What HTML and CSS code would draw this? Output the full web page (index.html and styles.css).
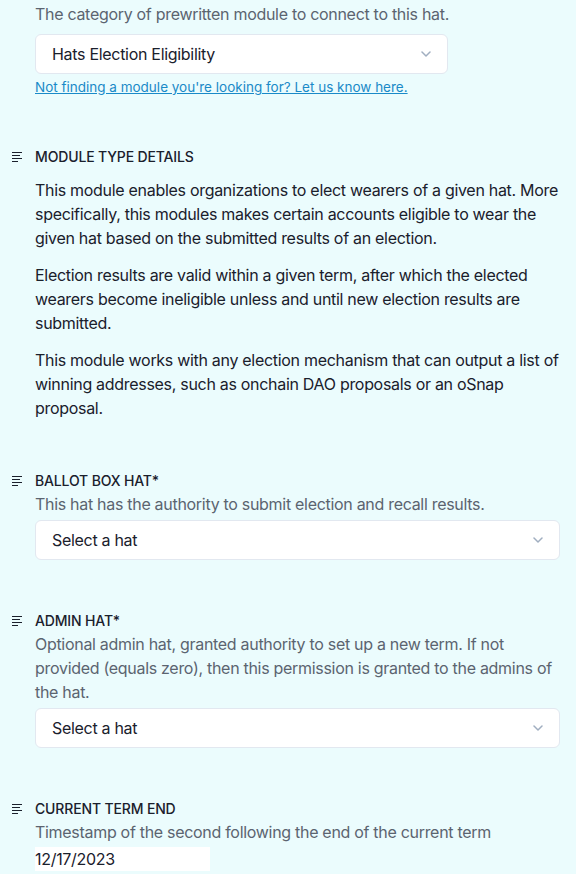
FILE: index.html
```html
<!DOCTYPE html>
<html>
<head>
<meta charset="utf-8">
<link rel="stylesheet" href="styles.css">
</head>
<body>
<div class="page">
  <section class="field first">
    <div class="body">
      <p class="desc">The category of prewritten module to connect to this hat.</p>
      <div class="select narrow"><span class="value">Hats Election Eligibility</span><svg class="chev" width="10" height="6" viewBox="0 0 10 6"><path d="M1 1l4 4 4-4" fill="none" stroke="#A0AEC0" stroke-width="1.5" stroke-linecap="round" stroke-linejoin="round"/></svg></div>
      <a class="link" href="#">Not finding a module you're looking for? Let us know here.</a>
    </div>
  </section>

  <section class="field details">
    <div class="head"><svg class="icon" width="11" height="10" viewBox="0 0 11 10"><path d="M0 0.5h10M0 3.5h8M0 6.5h10M0 9.5h6" stroke="#1A202C" stroke-width="1"/></svg><h3>Module Type Details</h3></div>
    <div class="body">
      <p class="para">This module enables organizations to elect wearers of a given hat. More specifically, this modules makes certain accounts eligible to wear the given hat based on the submitted results of an election.</p>
      <p class="para">Election results are valid within a given term, after which the elected wearers become ineligible unless and until new election results are submitted.</p>
      <p class="para">This module works with any election mechanism that can output a list of winning addresses, such as onchain DAO proposals or an oSnap proposal.</p>
    </div>
  </section>

  <section class="field">
    <div class="head"><svg class="icon" width="11" height="10" viewBox="0 0 11 10"><path d="M0 0.5h10M0 3.5h8M0 6.5h10M0 9.5h6" stroke="#1A202C" stroke-width="1"/></svg><h3>Ballot Box Hat*</h3></div>
    <div class="body">
      <p class="desc">This hat has the authority to submit election and recall results.</p>
      <div class="select"><span class="value">Select a hat</span><svg class="chev" width="10" height="6" viewBox="0 0 10 6"><path d="M1 1l4 4 4-4" fill="none" stroke="#A0AEC0" stroke-width="1.5" stroke-linecap="round" stroke-linejoin="round"/></svg></div>
    </div>
  </section>

  <section class="field">
    <div class="head"><svg class="icon" width="11" height="10" viewBox="0 0 11 10"><path d="M0 0.5h10M0 3.5h8M0 6.5h10M0 9.5h6" stroke="#1A202C" stroke-width="1"/></svg><h3>Admin Hat*</h3></div>
    <div class="body">
      <p class="desc">Optional admin hat, granted authority to set up a new term. If not provided (equals zero), then this permission is granted to the admins of the hat.</p>
      <div class="select"><span class="value">Select a hat</span><svg class="chev" width="10" height="6" viewBox="0 0 10 6"><path d="M1 1l4 4 4-4" fill="none" stroke="#A0AEC0" stroke-width="1.5" stroke-linecap="round" stroke-linejoin="round"/></svg></div>
    </div>
  </section>

  <section class="field">
    <div class="head"><svg class="icon" width="11" height="10" viewBox="0 0 11 10"><path d="M0 0.5h10M0 3.5h8M0 6.5h10M0 9.5h6" stroke="#1A202C" stroke-width="1"/></svg><h3>Current Term End</h3></div>
    <div class="body">
      <p class="desc">Timestamp of the second following the end of the current term</p>
      <div class="date">12/17/2023</div>
    </div>
  </section>
</div>
</body>
</html>
```

FILE: styles.css
```css
* { box-sizing: border-box; }
html, body { margin: 0; padding: 0; }
body {
  background: #EBFCFD;
  font-family: Inter, "Noto Sans", sans-serif;
  color: #1A202C;
  width: 576px;
  height: 874px;
  overflow: hidden;
}
.page {
  padding: 2px 16px 0 12px;
  display: flex;
  flex-direction: column;
}
.field {
  margin-top: 51px;
  display: flex;
  flex-direction: column;
}
.field.first { margin-top: 0; }
.field.details { margin-top: 50px; }
.head {
  display: flex;
  align-items: center;
  gap: 12px;
  height: 20px;
}
.icon { flex: none; display: block; }
.head h3 {
  margin: 0;
  font-size: 14px;
  font-weight: 500;
  text-transform: uppercase;
  line-height: 20px;
  letter-spacing: -0.15px;
  color: #1A202C;
}
.body {
  padding-left: 23px;
  display: flex;
  flex-direction: column;
}
.desc {
  margin: 1px 0 0;
  font-size: 16px;
  line-height: 24px;
  letter-spacing: -0.3px;
  color: #5B6470;
}
.first .desc { margin-top: 0; }
.para {
  margin: 13px 0 0;
  font-size: 16px;
  line-height: 24px;
  letter-spacing: -0.3px;
  color: #1A202C;
}
.para:first-child { margin-top: 11px; }
.select {
  margin-top: 4px;
  height: 40px;
  background: #fff;
  border: 1px solid #E2E8F0;
  border-radius: 6px;
  display: flex;
  align-items: center;
  justify-content: space-between;
  padding: 0 16px 0 16px;
  font-size: 16px;
  letter-spacing: -0.3px;
  color: #1A202C;
}
.select.narrow { width: 413px; margin-top: 8px; }
.chev { flex: none; display: block; }
.link {
  margin-top: 3px;
  font-size: 13.5px;
  line-height: 20px;
  color: #1A8AC8;
  text-decoration: underline;
  align-self: flex-start;
}
.date {
  margin-top: 3px;
  width: 175px;
  height: 24px;
  background: #fff;
  font-size: 16px;
  line-height: 24px;
  letter-spacing: -0.3px;
  color: #1A202C;
}
```
